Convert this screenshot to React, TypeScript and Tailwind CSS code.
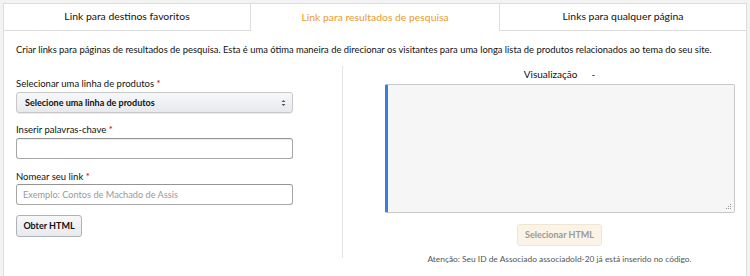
import React from "react";

const font = { fontFamily: 'Lato, "Noto Sans", Arial, sans-serif' };

function Label({ children }: { children: React.ReactNode }) {
  return (
    <div className="text-[9.5px] leading-[14px] text-[#111]">
      {children} <span className="text-[#c40000]">*</span>
    </div>
  );
}

export default function App() {
  return (
    <div className="w-[750px] h-[276px] bg-[#f3f3f3] pt-[3px] px-[3px] overflow-hidden" style={font}>
      <div className="flex h-[28px] text-[10.4px]">
        <div className="w-[248px] bg-white border border-[#dddddd] flex items-center justify-center text-[#111]">
          Link para destinos favoritos
        </div>
        <div className="w-[248px] bg-white border-t border-[#dddddd] flex items-center justify-center text-[#ec9a2c]">
          Link para resultados de pesquisa
        </div>
        <div className="flex-1 bg-white border border-[#dddddd] flex items-center justify-center text-[#111]">
          Links para qualquer página
        </div>
      </div>
      <div className="bg-white border-x border-[#dddddd] h-[245px]">
        <p className="pl-[12px] pt-[12px] text-[9.4px] leading-[14px] text-[#111] whitespace-nowrap">
          Criar links para páginas de resultados de pesquisa. Esta é uma ótima maneira de direcionar os visitantes para uma longa lista de produtos relacionados ao tema do seu site.
        </p>
        <div className="flex mt-[9px]">
          <div className="w-[339px] border-r border-[#e3e3e3] pl-[12px] pt-[11px] h-[192px]">
            <Label>Selecionar uma linha de produtos</Label>
            <div className="mt-[1px] w-[277px] h-[21px] rounded-[3px] border border-[#c8c8c8] bg-gradient-to-b from-[#f7f8fa] to-[#e7e9ec] shadow-[0_1px_0_rgba(0,0,0,0.08)] flex items-center justify-between pl-[8px] pr-[6px] text-[9px] font-bold text-[#111]">
              <span>Selecione uma linha de produtos</span>
              <svg width="5" height="8" viewBox="0 0 5 8">
                <path d="M0.5 3 L2.5 1 L4.5 3 Z" fill="#555" />
                <path d="M0.5 5 L2.5 7 L4.5 5 Z" fill="#555" />
              </svg>
            </div>
            <div className="mt-[10px]">
              <Label>Inserir palavras-chave</Label>
            </div>
            <div className="mt-[1px] w-[277px] h-[21px] rounded-[3px] border border-[#a6a6a6] border-t-[#949494] bg-white shadow-[inset_0_1px_0_rgba(0,0,0,0.07)]" />
            <div className="mt-[11px]">
              <Label>Nomear seu link</Label>
            </div>
            <div className="w-[277px] h-[21px] rounded-[3px] border border-[#a6a6a6] border-t-[#949494] bg-white flex items-center px-[6px] text-[9.2px] text-[#999]">
              Exemplo: Contos de Machado de Assis
            </div>
            <button className="mt-[10px] h-[22px] w-[66px] rounded-[3px] border border-[#adb1b8] bg-gradient-to-b from-[#f7f8fa] to-[#e7e9ec] text-[9px] font-bold text-[#111]">
              Obter HTML
            </button>
          </div>
          <div className="flex-1 flex flex-col items-center pl-[30px] pt-[1px]">
            <div className="text-[10px] leading-[14px] text-[#111] flex gap-[14px]">
              <span>Visualização</span>
              <span>-</span>
            </div>
            <div className="relative mt-[3px] w-[350px] h-[129px] bg-[#f6f6f6] border border-[#c8c8c8] border-l-[3px] border-l-[#3b7dd8] rounded-[2px]">
              <svg className="absolute right-[2px] bottom-[2px]" width="6" height="6" viewBox="0 0 6 6">
                <rect x="4" y="0" width="1" height="1" fill="#999" />
                <rect x="2" y="2" width="1" height="1" fill="#999" />
                <rect x="4" y="2" width="1" height="1" fill="#999" />
                <rect x="0" y="4" width="1" height="1" fill="#999" />
                <rect x="2" y="4" width="1" height="1" fill="#999" />
                <rect x="4" y="4" width="1" height="1" fill="#999" />
              </svg>
            </div>
            <button className="mt-[11px] h-[22px] w-[85px] rounded-[3px] border border-[#f0e6d2] bg-[#fbf4e6] text-[9px] font-bold text-[#9a9a9a]">
              Selecionar HTML
            </button>
            <div className="mt-[7px] text-[8.4px] leading-[12px] text-[#555]">
              Atenção: Seu ID de Associado associadoId-20 já está inserido no código.
            </div>
          </div>
        </div>
      </div>
    </div>
  );
}
